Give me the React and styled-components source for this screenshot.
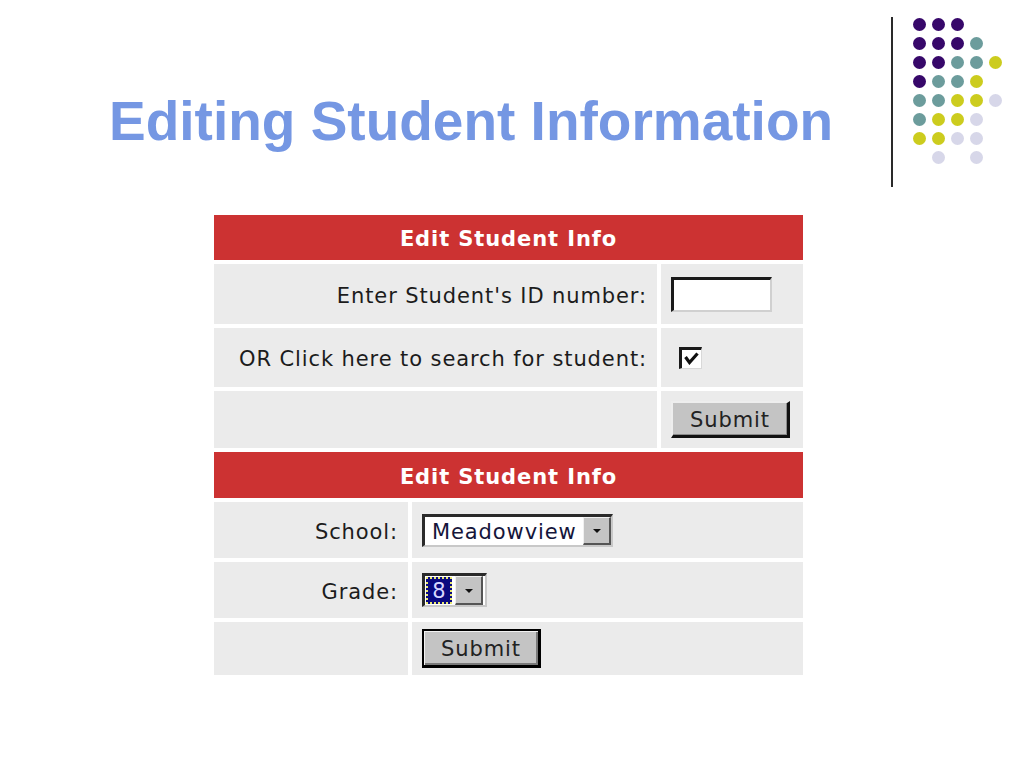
import React from "react";
import styled, { createGlobalStyle } from "styled-components";

const GlobalStyle = createGlobalStyle`
  html, body {
    margin: 0;
    padding: 0;
    background: #ffffff;
  }
`;

const Page = styled.div`
  width: 1024px;
  height: 768px;
  background: #ffffff;
  overflow: hidden;
`;

const Header = styled.header`
  display: flex;
  align-items: flex-start;
  height: 215px;
`;

const TitleBox = styled.div`
  flex: none;
  width: 891px;
  box-sizing: border-box;
  padding: 94px 0 0 109px;
`;

const Title = styled.h1`
  margin: 0;
  font-family: "Liberation Sans", Arial, sans-serif;
  font-weight: bold;
  font-size: 55px;
  line-height: 55px;
  color: #7597e3;
  white-space: nowrap;
`;

const Deco = styled.div`
  display: flex;
  align-items: flex-start;
  padding-top: 17px;
`;

const Rule = styled.div`
  width: 2px;
  height: 170px;
  background: #2a2a2a;
`;

const DotGrid = styled.div`
  display: grid;
  grid-template-columns: repeat(5, 13px);
  grid-auto-rows: 13px;
  gap: 6px;
  margin-left: 20px;
  margin-top: 1px;
`;

const Dot = styled.span`
  width: 13px;
  height: 13px;
  border-radius: 50%;
  background: ${(p) => p.$color};
`;

const Board = styled.div`
  margin-left: 214px;
  width: 589px;
  display: flex;
  flex-direction: column;
  gap: 4px;
`;

const Bar = styled.div`
  height: ${(p) => p.$h}px;
  box-sizing: border-box;
  padding-top: 3px;
  background: #cc3232;
  color: #ffffff;
  display: flex;
  align-items: center;
  justify-content: center;
  font-family: "DejaVu Sans", Verdana, sans-serif;
  font-weight: bold;
  font-size: 21px;
  letter-spacing: 0.9px;
`;

const Row = styled.div`
  display: grid;
  grid-template-columns: ${(p) => p.$cols};
  column-gap: ${(p) => p.$gap}px;
  height: ${(p) => p.$h}px;
`;

const Cell = styled.div`
  background: #ebebeb;
  display: flex;
  align-items: center;
  justify-content: ${(p) => (p.$right ? "flex-end" : "flex-start")};
  box-sizing: border-box;
  padding: ${(p) => (p.$right ? "3px 10px 0 0" : "0 0 0 10px")};
`;

const Label = styled.span`
  font-family: "DejaVu Sans", Verdana, sans-serif;
  font-size: 21px;
  letter-spacing: 0.9px;
  color: #1c1c1c;
  white-space: nowrap;
`;

const TextBox = styled.input`
  width: 101px;
  height: 35px;
  box-sizing: border-box;
  margin: 0;
  padding: 0;
  background: #ffffff;
  border-style: solid;
  border-width: 3px 2px 2px 3px;
  border-color: #1a1a1a #d0d0d0 #d0d0d0 #1a1a1a;
  outline: none;
`;

const CheckBox = styled.span`
  width: 23px;
  height: 22px;
  margin-left: 8px;
  box-sizing: border-box;
  background: #ffffff;
  border-style: solid;
  border-width: 3px 1px 1px 3px;
  border-color: #1a1a1a #d8d8d8 #d8d8d8 #1a1a1a;
  display: flex;
  align-items: center;
  justify-content: center;
`;

const Button = styled.button`
  width: 119px;
  height: ${(p) => p.$h}px;
  box-sizing: border-box;
  margin: 0;
  padding: 2px 0 0;
  background: #c4c4c4;
  font-family: "DejaVu Sans", Verdana, sans-serif;
  font-size: 21px;
  letter-spacing: 0.9px;
  color: #222222;
  border-style: solid;
  border-width: 2px 3px 3px 2px;
  border-color: ${(p) =>
    p.$default ? "#000000" : "#eeeeee #111111 #111111 #eeeeee"};
  box-shadow: ${(p) =>
    p.$default ? "inset 1px 1px #f2f2f2, inset -2px -2px #7a7a7a" : "inset -1px -1px #8a8a8a"};
`;

const Select = styled.div`
  display: flex;
  width: ${(p) => p.$w}px;
  height: ${(p) => p.$h}px;
  box-sizing: border-box;
  background: #ffffff;
  border-style: solid;
  border-width: 3px 2px 2px 3px;
  border-color: #2a2a2a #c8c8c8 #c8c8c8 #2a2a2a;
`;

const SelectValue = styled.span`
  flex: 1;
  display: flex;
  align-items: center;
  padding-left: 7px;
  padding-top: 2px;
  font-family: "DejaVu Sans", Verdana, sans-serif;
  font-size: 21px;
  letter-spacing: 0.9px;
  color: #15153a;
`;

const PickedValue = styled.span`
  width: 26px;
  margin: 1px 3px 1px 1px;
  display: flex;
  align-items: center;
  justify-content: center;
  background: #0a0a80;
  outline: 2px dotted #e8e870;
  outline-offset: -2px;
  font-family: "DejaVu Sans", Verdana, sans-serif;
  font-size: 21px;
  color: #d8d8ff;
`;

const DropButton = styled.span`
  width: 28px;
  box-sizing: border-box;
  background: #c4c4c4;
  border-style: solid;
  border-width: 1px 2px 2px 1px;
  border-color: #f0f0f0 #555555 #555555 #f0f0f0;
  display: flex;
  align-items: center;
  justify-content: center;
`;

const Arrow = styled.span`
  width: 0;
  height: 0;
  border-left: 4px solid transparent;
  border-right: 4px solid transparent;
  border-top: 4px solid #111111;
  margin-top: 2px;
`;

const dotColors = {
  P: "#37086a",
  T: "#6c9c9c",
  Y: "#cccc1e",
  L: "#d7d7e9",
  ".": "transparent",
};

const dotRows = [
  "PPP..",
  "PPPT.",
  "PPTTY",
  "PTTY.",
  "TTYYL",
  "TYYL.",
  "YYLL.",
  ".L.L.",
];

const upperCols = "443px 142px";
const lowerCols = "194px 391px";

const App = () => (
  <Page>
    <GlobalStyle />
    <Header>
      <TitleBox>
        <Title>Editing Student Information</Title>
      </TitleBox>
      <Deco>
        <Rule />
        <DotGrid>
          {dotRows.map((row, r) =>
            row
              .split("")
              .map((c, i) => <Dot key={`${r}-${i}`} $color={dotColors[c]} />)
          )}
        </DotGrid>
      </Deco>
    </Header>

    <Board>
      <Bar $h={45}>Edit Student Info</Bar>
      <Row $cols={upperCols} $gap={4} $h={60}>
        <Cell $right>
          <Label>Enter Student's ID number:</Label>
        </Cell>
        <Cell>
          <TextBox type="text" defaultValue="" />
        </Cell>
      </Row>
      <Row $cols={upperCols} $gap={4} $h={59}>
        <Cell $right>
          <Label>OR Click here to search for student:</Label>
        </Cell>
        <Cell>
          <CheckBox>
            <svg width="15" height="13" viewBox="0 0 15 13">
              <path
                d="M1.5 5 L5.5 10.5 L13.5 1.5"
                fill="none"
                stroke="#111"
                strokeWidth="3.2"
              />
            </svg>
          </CheckBox>
        </Cell>
      </Row>
      <Row $cols={upperCols} $gap={4} $h={57}>
        <Cell $right />
        <Cell>
          <Button $h={37}>Submit</Button>
        </Cell>
      </Row>

      <Bar $h={46}>Edit Student Info</Bar>
      <Row $cols={lowerCols} $gap={4} $h={56}>
        <Cell $right>
          <Label>School:</Label>
        </Cell>
        <Cell>
          <Select $w={191} $h={33}>
            <SelectValue>Meadowview</SelectValue>
            <DropButton>
              <Arrow />
            </DropButton>
          </Select>
        </Cell>
      </Row>
      <Row $cols={lowerCols} $gap={4} $h={56}>
        <Cell $right>
          <Label>Grade:</Label>
        </Cell>
        <Cell>
          <Select $w={65} $h={34}>
            <PickedValue>8</PickedValue>
            <DropButton>
              <Arrow />
            </DropButton>
          </Select>
        </Cell>
      </Row>
      <Row $cols={lowerCols} $gap={4} $h={53}>
        <Cell $right />
        <Cell>
          <Button $h={39} $default>
            Submit
          </Button>
        </Cell>
      </Row>
    </Board>
  </Page>
);

export default App;
